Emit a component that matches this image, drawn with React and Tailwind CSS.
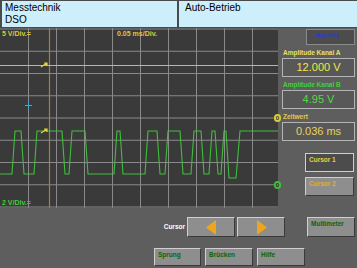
import React from "react";

const font = { fontFamily: '"Liberation Sans", Arial, sans-serif' };

function Btn({ children, className = "", text = "text-[#0b640b]" }) {
  return (
    <div
      className={`h-full bg-[#8e8e8e] border border-t-[#cfcfcf] border-l-[#cfcfcf] border-r-[#3a3a3a] border-b-[#3a3a3a] ${className}`}
    >
      <div className={`pl-[3px] pt-[2px] text-[6.5px] leading-[8px] font-bold ${text}`}>{children}</div>
    </div>
  );
}

function ArrowBtn({ dir }) {
  return (
    <div className="w-[48px] h-full bg-[#8e8e8e] border border-t-[#cfcfcf] border-l-[#cfcfcf] border-r-[#3a3a3a] border-b-[#3a3a3a] flex items-center justify-center">
      <svg width="11" height="15" viewBox="0 0 11 15">
        {dir === "left" ? (
          <polygon points="0,7.5 10,0 10,15" fill="#f0a41c" />
        ) : (
          <polygon points="11,7.5 1,0 1,15" fill="#f0a41c" />
        )}
      </svg>
    </div>
  );
}

function Scope() {
  const hs = [1, 23.25, 45.5, 67.75, 90, 112.25, 134.5, 156.75, 179];
  const vs = [28, 56, 84, 112, 140, 168, 196, 224, 252];
  const H = 103, L = 146, D = 150;
  const seg = [
    [0, L], [12, L], [15, H], [21, H], [24, L], [34, L], [37, H], [62, H], [65, L], [69, L],
    [72, H], [85, H], [88, L], [114, L], [117, H], [120, H], [123, L], [145, L], [148, H],
    [157, H], [160, L], [165, L], [168, H], [180, H], [183, L], [191, L], [194, H], [201, H],
    [204, L], [209, L], [212, H], [215, H], [218, L], [221, L], [224, H], [226, H], [229, D],
    [236, D], [240, H], [278, H],
  ];
  const pts = seg.map(([x, y]) => `${x},${y}`).join(" ");
  return (
    <div className="relative w-[278px] h-[180px] bg-[#3a3a3a] shrink-0">
      <svg className="absolute inset-0" width="278" height="180" viewBox="0 0 278 180">
        {hs.map((y) => (
          <line key={"h" + y} x1="0" x2="278" y1={y} y2={y} stroke="#8a8a8a" strokeWidth="1" />
        ))}
        {vs.map((x) => (
          <line key={"v" + x} x1={x + 0.5} x2={x + 0.5} y1="0" y2="180" stroke="#8a8a8a" strokeWidth="1" />
        ))}
        <line x1="49.5" x2="49.5" y1="0" y2="180" stroke="#a4803c" strokeWidth="1.2" />
        <line x1="0" x2="278" y1="37.5" y2="37.5" stroke="#c9c23c" strokeWidth="1.2" />
        <polyline points={pts} fill="none" stroke="#3fbf3a" strokeWidth="1.1" />
        <path d="M41 39 L47 35 M44 35 L47 35 L47 38" stroke="#e8d040" strokeWidth="1.2" fill="none" />
        <path d="M41 105 L47 101 M44 101 L47 101 L47 104" stroke="#e8d040" strokeWidth="1.2" fill="none" />
        <path d="M28.5 73 L28.5 82 M25 77.5 L32 77.5" stroke="#3aa8d8" strokeWidth="1" />
      </svg>
      <div className="absolute left-[2px] top-[1px] text-[7px] leading-[9px] font-bold text-[#d8cc3a]">5 V/Div.=</div>
      <div className="absolute left-[117px] top-[1px] text-[7px] leading-[9px] font-bold text-[#d8cc3a]">0.05 ms/Div.</div>
      <div className="absolute left-[2px] bottom-[1px] text-[7px] leading-[9px] font-bold text-[#3fcf3a]">2 V/Div.=</div>
      <div className="absolute right-[-3px] top-[86px] w-[7px] h-[8px] rounded-full bg-[#d8cc3a] text-[6px] leading-[8px] text-center font-bold text-[#3a3a3a]">0</div>
      <div className="absolute right-[-3px] top-[153px] w-[7px] h-[8px] rounded-full bg-[#3fbf3a] text-[6px] leading-[8px] text-center font-bold text-[#2a2a2a]">0</div>
    </div>
  );
}

function ValBox({ label, value, color, labelColor }) {
  return (
    <>
      <div className={`mt-[4px] ml-[3px] text-[6.5px] leading-[8px] font-bold ${labelColor}`}>{label}</div>
      <div className={`mt-[1px] ml-[2px] w-[73px] h-[19px] bg-[#585858] border border-[#b4b4b4] flex items-center justify-center text-[11px] ${color}`}>
        {value}
      </div>
    </>
  );
}

export default function App() {
  return (
    <div className="w-[357px] h-[268px] bg-[#5e5e5e] overflow-hidden flex flex-col" style={font}>
      <div className="flex h-[28px] bg-[#4a4a4a] gap-[2px] pl-[2px] pt-[1px] pb-[1px] shrink-0">
        <div className="w-[175px] bg-[#cdeefb] pl-[3px] pt-[1px] text-[10px] leading-[12px] text-black">
          <div>Messtechnik</div>
          <div>DSO</div>
        </div>
        <div className="flex-1 bg-[#cdeefb] pl-[6px] pt-[1px] text-[10px] leading-[12px] text-black">
          Auto-Betrieb
        </div>
      </div>
      <div className="flex h-[180px] shrink-0">
        <Scope />
        <div className="flex-1 flex flex-col pl-[2px]">
          <div className="mt-[1px] ml-[26px] w-[49px] h-[16px] bg-[#4c4c4c] border border-[#8a8a8a] pl-[8px] text-[6px] leading-[10px] font-bold text-[#2a3ad8]">
            Manhtnt
          </div>
          <ValBox label="Amplitude Kanal A" value="12.000 V" color="text-[#efe64a]" labelColor="text-[#e8e060]" />
          <ValBox label="Amplitude Kanal B" value="4.95 V" color="text-[#4fdc42]" labelColor="text-[#3fd03a]" />
          <ValBox label="Zeitwert" value="0.036 ms" color="text-[#e6d460]" labelColor="text-[#e0c850]" />
          <div className="mt-[12px] ml-[25px] w-[49px] h-[19px] bg-[#4c4c4c] border border-[#cfcfcf] pl-[3px] pt-[2px] text-[6.5px] leading-[8px] font-bold text-[#e8d040]">
            Cursor 1
          </div>
          <div className="mt-[5px] ml-[25px] w-[49px] h-[19px]">
            <Btn text="text-[#e8a83a]">Cursor 2</Btn>
          </div>
        </div>
      </div>
      <div className="flex h-[20px] mt-[9px] items-stretch">
        <div className="w-[187px] pr-[2px] flex items-center justify-end text-[6.5px] font-bold text-white">Cursor</div>
        <ArrowBtn dir="left" />
        <div className="w-[2px]" />
        <ArrowBtn dir="right" />
        <div className="ml-[22px] w-[48px]">
          <Btn>
            Multimeter
          </Btn>
        </div>
      </div>
      <div className="flex h-[18px] mt-[11px] gap-[4px] pl-[154px]">
        <div className="w-[47px]"><Btn>Sprung</Btn></div>
        <div className="w-[48px]"><Btn>Brücken</Btn></div>
        <div className="w-[48px]"><Btn>Hilfe</Btn></div>
      </div>
    </div>
  );
}
